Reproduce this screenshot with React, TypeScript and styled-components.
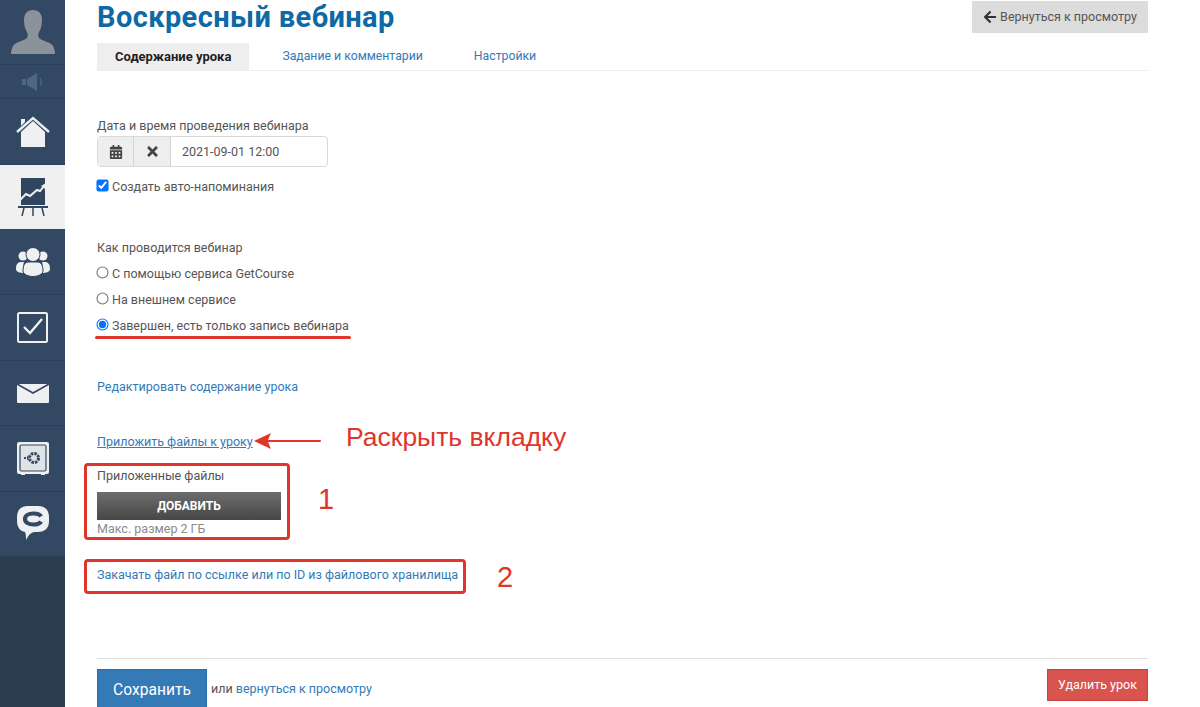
import React from 'react'
import styled, { createGlobalStyle } from 'styled-components'
import { FaArrowLeft, FaCalendarAlt, FaTimes } from 'react-icons/fa'

const GlobalStyle = createGlobalStyle`
  html, body {
    margin: 0;
    padding: 0;
    height: 707px;
    overflow: hidden;
    background: #fff;
  }
  * {
    box-sizing: border-box;
  }
`

const AvatarIcon = () => (
  <svg width="44" height="44" viewBox="0 0 44 44">
    <path
      fill="#8c929a"
      d="M22 0c-6 0-9 4-9 10 0 5 1 9 3 12 1 2 1 4 0 6-3 3-12 4-14 8-1 2-2 5-2 8h44c0-3-1-6-2-8-2-4-11-5-14-8-1-2-1-4 0-6 2-3 3-7 3-12 0-6-3-10-9-10z"
    />
  </svg>
)

const SpeakerIcon = () => (
  <svg width="22" height="18" viewBox="0 0 22 18">
    <path fill="#4d6886" d="M0 6h4v6H0zM5 6l10-6v18L5 12z" />
    <path fill="none" stroke="#4d6886" strokeWidth="1.3" d="M18 5c1.5 2.500 1.500 5.500 0 8" />
  </svg>
)

const HomeIcon = () => (
  <svg width="34" height="32" viewBox="0 0 34 32">
    <path fill="#eef0f1" d="M5 3h4v3L5 10zM5 16 17 5l12 11v15H5z" />
    <path fill="none" stroke="#eef0f1" strokeWidth="2.4" d="M1 16 17 2l16 14" />
  </svg>
)

const BoardIcon = () => (
  <svg width="30" height="40" viewBox="0 0 30 40">
    <path fill="#2f4560" d="M3 1h24v27H3z" />
    <path fill="none" stroke="#f0f0f0" strokeWidth="2" d="M1 24l7-7 4 2 7-6 3 1 4-5" />
    <path fill="#f0f0f0" d="M28 6l-1 6-4-3z" />
    <path fill="#2f4560" d="M0 29h30v2H0z" />
    <path fill="none" stroke="#2f4560" strokeWidth="1.5" d="M6 31l-2 8M15 31v8M24 31l2 8" />
  </svg>
)

const GroupIcon = () => (
  <svg width="34" height="30" viewBox="0 0 34 30">
    <circle fill="#eef0f1" cx="7" cy="9" r="4.500" />
    <circle fill="#eef0f1" cx="27" cy="9" r="4.500" />
    <path fill="#eef0f1" d="M0 22c0-5 2-7 5-7h3c-1 3-1 6 0 11-4 0-8-1-8-4zM34 22c0-5-2-7-5-7h-3c1 3 1 6 0 11 4 0 8-1 8-4z" />
    <circle fill="#eef0f1" stroke="#324863" strokeWidth="1" cx="17" cy="7.500" r="7" />
    <path fill="#eef0f1" stroke="#324863" strokeWidth="1" d="M7 24c0-6 2-9 6-9h8c4 0 6 3 6 9 0 3-5 5.500-10 5.500S7 27 7 24z" />
  </svg>
)

const CheckIcon = () => (
  <svg width="32" height="32" viewBox="0 0 32 32">
    <rect fill="none" stroke="#eef0f1" strokeWidth="2" x="1" y="1" width="29" height="29" rx="1.500" />
    <path fill="none" stroke="#eef0f1" strokeWidth="2.400" d="M7 15l6 6L25 7" />
  </svg>
)

const MailIcon = () => (
  <svg width="32" height="19" viewBox="0 0 32 19">
    <rect fill="#eef0f1" width="32" height="19" rx="1" />
    <path fill="none" stroke="#324863" strokeWidth="1.600" d="M0 0l16 9 16-9" />
  </svg>
)

const SafeIcon = () => (
  <svg width="32" height="33" viewBox="0 0 32 33">
    <path fill="#eef0f1" d="M2 0h28a2 2 0 0 1 2 2v28a2 2 0 0 1-2 2h-2v1h-4v-1H8v1H4v-1H2a2 2 0 0 1-2-2V2a2 2 0 0 1 2-2z" />
    <rect fill="#dfe3e6" stroke="#324863" strokeWidth="1.200" x="3" y="3" width="26" height="26" rx="1.500" />
    <circle fill="none" stroke="#324863" strokeWidth="3" strokeDasharray="2.500 1" cx="17" cy="16" r="4.500" />
    <path fill="#324863" d="M7 15h2v2H7zM10 13.500l2 2.500-2 2.500z" />
  </svg>
)

const ChatIcon = () => (
  <svg width="32" height="36" viewBox="0 0 32 36">
    <path fill="#eef0f1" d="M11 0h10c7 0 11 4 11 11v4c0 7-4 11-11 11h-3c-3 0-6 2-9 8 0-3 0-6-1-8-5-1-8-5-8-11v-4C0 4 4 0 11 0z" />
    <path fill="none" stroke="#324863" strokeWidth="4.200" d="M24 10.500C23 8.500 20 7.500 16.500 7.500c-5 0-8.500 2-8.500 5.500s3.500 5.500 8.500 5.500c3.500 0 6.500-1 7.500-3" />
  </svg>
)

export default function App() {
  return (
    <Page>
      <GlobalStyle />
      <Sidebar>
        <NavItem $h={65}><AvatarIcon /></NavItem>
        <NavItem $h={34}><SpeakerIcon /></NavItem>
        <NavItem $h={66}><HomeIcon /></NavItem>
        <NavItem $h={64} $active><BoardIcon /></NavItem>
        <NavItem $h={66}><GroupIcon /></NavItem>
        <NavItem $h={66}><CheckIcon /></NavItem>
        <NavItem $h={65}><MailIcon /></NavItem>
        <NavItem $h={66}><SafeIcon /></NavItem>
        <NavItem $h={65}><ChatIcon /></NavItem>
      </Sidebar>

      <Main>
        <Header>
          <Title>Воскресный вебинар</Title>
          <BackButton>
            <FaArrowLeft size={14} />
            Вернуться к просмотру
          </BackButton>
        </Header>

        <Tabs>
          <Tab $active>Содержание урока</Tab>
          <Tab>Задание и комментарии</Tab>
          <Tab>Настройки</Tab>
        </Tabs>

        <Label $top={46}>Дата и время проведения вебинара</Label>
        <DateGroup>
          <AddOn $w={36}><FaCalendarAlt size={14} /></AddOn>
          <AddOn $w={37}><FaTimes size={15} /></AddOn>
          <DateValue>2021-09-01 12:00</DateValue>
        </DateGroup>
        <Choice $top={11}>
          <input type="checkbox" defaultChecked />
          Создать авто-напоминания
        </Choice>

        <Label $top={43}>Как проводится вебинар</Label>
        <Choice $top={8}>
          <input type="radio" name="kind" />
          С помощью сервиса GetCourse
        </Choice>
        <Choice $top={8}>
          <input type="radio" name="kind" />
          На внешнем сервисе
        </Choice>
        <Choice $top={8}>
          <input type="radio" name="kind" defaultChecked />
          Завершен, есть только запись вебинара
        </Choice>

        <TextLink $top={43}>Редактировать содержание урока</TextLink>
        <TextLink $top={37} $underline>Приложить файлы к уроку</TextLink>

        <Label $top={16}>Приложенные файлы</Label>
        <AddButton>ДОБАВИТЬ</AddButton>
        <Hint>Макс. размер 2 ГБ</Hint>
        <TextLink $top={28}>Закачать файл по ссылке или по ID из файлового хранилища</TextLink>

        <Footer>
          <FooterLeft>
            <SaveButton>Сохранить</SaveButton>
            <FooterText>
              или <FooterLink>вернуться к просмотру</FooterLink>
            </FooterText>
          </FooterLeft>
          <DeleteButton>Удалить урок</DeleteButton>
        </Footer>
      </Main>

      <Underline />
      <RedBox $x={84} $y={463} $w={206} $h={77} />
      <RedBox $x={84} $y={559} $w={382} $h={35} />
      <ArrowMark width="68" height="16" viewBox="0 0 68 16">
        <path fill="#e0352b" d="M0 8l17-8-3 7h52a1 1 0 0 1 0 2H14l3 7z" />
      </ArrowMark>
      <Note $x={346} $y={422} $size={26.500}>Раскрыть вкладку</Note>
      <Note $x={318} $y={484} $size={29}>1</Note>
      <Note $x={497} $y={562} $size={29}>2</Note>
    </Page>
  )
}

const bodyFont = `Roboto, "Noto Sans", sans-serif`

const Page = styled.div`
  position: relative;
  display: flex;
  width: 1200px;
  height: 707px;
  overflow: hidden;
  font-family: ${bodyFont};
  font-size: 12.500px;
  line-height: 18px;
  color: #555;
`
const Sidebar = styled.nav`
  flex: 0 0 65px;
  background: #2d3d51;
`
const NavItem = styled.div<{ $h: number; $active?: boolean }>`
  display: flex;
  align-items: center;
  justify-content: center;
  height: ${(p) => p.$h}px;
  background: ${(p) => (p.$active ? '#f0f0f0' : '#324863')};
  border-bottom: 1px solid ${(p) => (p.$active ? '#f0f0f0' : '#2b3f56')};
`
const Main = styled.main`
  flex: 1;
  display: flex;
  flex-direction: column;
  align-items: flex-start;
  padding: 0 52px 0 32px;
  > * {
    flex-shrink: 0;
  }
`
const Header = styled.header`
  display: flex;
  justify-content: space-between;
  align-items: flex-start;
  width: 100%;
  height: 43px;
  padding-top: 1px;
`
const Title = styled.h1`
  margin: 0;
  font-size: 29px;
  line-height: 32px;
  letter-spacing: 0.4px;
  font-weight: 700;
  color: #0e69a5;
`
const BackButton = styled.div`
  display: flex;
  align-items: center;
  justify-content: center;
  gap: 3px;
  width: 176px;
  height: 32px;
  background: #dcdcdc;
  color: #555;
  svg {
    color: #333;
  }
`
const Tabs = styled.div`
  display: flex;
  gap: 15px;
  width: 100%;
  height: 28px;
  border-bottom: 1px solid #eeeeee;
`
const Tab = styled.div<{ $active?: boolean }>`
  height: 27px;
  padding: 0 18px;
  font-size: ${(p) => (p.$active ? 13 : 12.25)}px;
  line-height: 27px;
  font-weight: ${(p) => (p.$active ? 700 : 400)};
  color: ${(p) => (p.$active ? '#1f1f1f' : '#337ab7')};
  background: ${(p) => (p.$active ? '#eeeeee' : 'transparent')};
`
const Label = styled.div<{ $top: number }>`
  margin-top: ${(p) => p.$top}px;
`
const DateGroup = styled.div`
  display: flex;
  width: 231px;
  height: 31px;
  margin-top: 1px;
  border: 1px solid #d9d9d9;
  border-radius: 4px;
  overflow: hidden;
`
const AddOn = styled.div<{ $w: number }>`
  display: flex;
  align-items: center;
  justify-content: center;
  width: ${(p) => p.$w}px;
  background: #eeeeee;
  border-right: 1px solid #d4d4d4;
  color: #444;
`
const DateValue = styled.div`
  flex: 1;
  padding-left: 11px;
  line-height: 29px;
  color: #555;
`
const Choice = styled.label<{ $top: number }>`
  display: flex;
  align-items: center;
  margin-top: ${(p) => p.$top}px;
  input {
    width: 11px;
    height: 11px;
    margin: -3px 4px 0 0;
    transform: scale(1.1);
    accent-color: #0075ff;
  }
`
const TextLink = styled.a<{ $top: number; $underline?: boolean }>`
  margin-top: ${(p) => p.$top}px;
  color: #337ab7;
  text-decoration: ${(p) => (p.$underline ? 'underline' : 'none')};
`
const AddButton = styled.div`
  width: 184px;
  height: 28px;
  margin-top: 7px;
  background: linear-gradient(#6d6d6d, #474747);
  font-size: 12px;
  font-weight: 700;
  line-height: 28px;
  text-align: center;
  color: #fff;
`
const Hint = styled.div`
  color: #8a8a8a;
`
const Footer = styled.footer`
  display: flex;
  justify-content: space-between;
  align-items: flex-start;
  width: 100%;
  margin-top: 74px;
  padding-top: 10px;
  border-top: 1px solid #dddddd;
`
const FooterLeft = styled.div`
  display: flex;
  align-items: flex-start;
`
const SaveButton = styled.div`
  width: 110px;
  height: 44px;
  background: #337ab7;
  border: 1px solid #2e6da4;
  font-size: 15.600px;
  line-height: 40px;
  text-align: center;
  color: #fff;
`
const FooterText = styled.div`
  margin: 11px 0 0 4px;
`
const FooterLink = styled.a`
  color: #337ab7;
`
const DeleteButton = styled.div`
  width: 101px;
  height: 32px;
  background: #d9534f;
  border: 1px solid #d43f3a;
  line-height: 30px;
  text-align: center;
  color: #fff;
`
const Underline = styled.div`
  position: absolute;
  left: 95px;
  top: 336px;
  width: 256px;
  height: 3px;
  border-radius: 2px;
  background: #e0352b;
`
const RedBox = styled.div<{ $x: number; $y: number; $w: number; $h: number }>`
  position: absolute;
  left: ${(p) => p.$x}px;
  top: ${(p) => p.$y}px;
  width: ${(p) => p.$w}px;
  height: ${(p) => p.$h}px;
  border: 3px solid #e0352b;
  border-radius: 4px;
`
const ArrowMark = styled.svg`
  position: absolute;
  left: 254px;
  top: 433px;
`
const Note = styled.div<{ $x: number; $y: number; $size: number }>`
  position: absolute;
  left: ${(p) => p.$x}px;
  top: ${(p) => p.$y}px;
  font-family: "Liberation Sans", Arial, sans-serif;
  font-size: ${(p) => p.$size}px;
  line-height: 30px;
  color: #e0352b;
`
